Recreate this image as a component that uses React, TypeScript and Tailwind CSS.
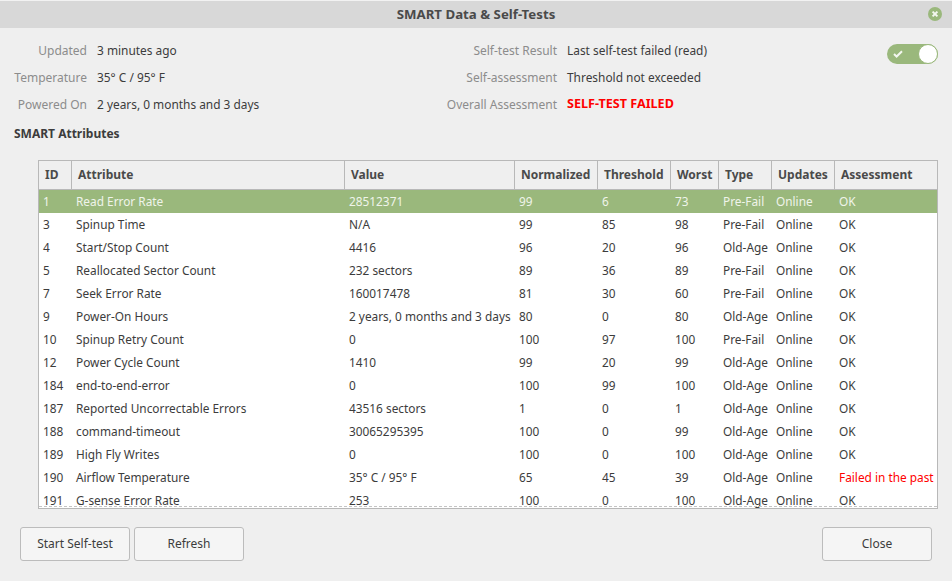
const COLUMNS = 'grid grid-cols-[33px_273px_170px_83px_73px_48px_53px_63px_103px]';

const HEADERS = ['ID', 'Attribute', 'Value', 'Normalized', 'Threshold', 'Worst', 'Type', 'Updates', 'Assessment'];

const ROWS: string[][] = [
  ['1', 'Read Error Rate', '28512371', '99', '6', '73', 'Pre-Fail', 'Online', 'OK'],
  ['3', 'Spinup Time', 'N/A', '99', '85', '98', 'Pre-Fail', 'Online', 'OK'],
  ['4', 'Start/Stop Count', '4416', '96', '20', '96', 'Old-Age', 'Online', 'OK'],
  ['5', 'Reallocated Sector Count', '232 sectors', '89', '36', '89', 'Pre-Fail', 'Online', 'OK'],
  ['7', 'Seek Error Rate', '160017478', '81', '30', '60', 'Pre-Fail', 'Online', 'OK'],
  ['9', 'Power-On Hours', '2 years, 0 months and 3 days', '80', '0', '80', 'Old-Age', 'Online', 'OK'],
  ['10', 'Spinup Retry Count', '0', '100', '97', '100', 'Pre-Fail', 'Online', 'OK'],
  ['12', 'Power Cycle Count', '1410', '99', '20', '99', 'Old-Age', 'Online', 'OK'],
  ['184', 'end-to-end-error', '0', '100', '99', '100', 'Old-Age', 'Online', 'OK'],
  ['187', 'Reported Uncorrectable Errors', '43516 sectors', '1', '0', '1', 'Old-Age', 'Online', 'OK'],
  ['188', 'command-timeout', '30065295395', '100', '0', '99', 'Old-Age', 'Online', 'OK'],
  ['189', 'High Fly Writes', '0', '100', '0', '100', 'Old-Age', 'Online', 'OK'],
  ['190', 'Airflow Temperature', '35° C / 95° F', '65', '45', '39', 'Old-Age', 'Online', 'Failed in the past'],
  ['191', 'G-sense Error Rate', '253', '100', '0', '100', 'Old-Age', 'Online', 'OK'],
];

function InfoRow({ label, labelWidth, value, danger }: { label: string; labelWidth: string; value: string; danger?: boolean }) {
  return (
    <div className="flex h-[27px] items-center gap-[10px]">
      <span className={`${labelWidth} text-right text-[#8c8c8c] whitespace-nowrap`}>{label}</span>
      <span className={danger ? 'text-[12.6px] font-bold text-[#ff0000]' : 'text-[11.9px]'}>{value}</span>
    </div>
  );
}

function Button({ label }: { label: string }) {
  return (
    <button className="h-[34px] w-[110px] rounded-[3px] border border-[#bcbcbc] bg-[#f5f5f5] text-[#3c3c3c]">{label}</button>
  );
}

export default function App() {
  return (
    <div className="flex h-[581px] w-[952px] flex-col overflow-hidden bg-[#efefef] font-['Noto_Sans',sans-serif] text-[12px] text-[#3c3c3c]">
      {/* title bar */}
      <div className="relative flex h-[28px] shrink-0 items-center justify-center border-t border-[#f2f2f2] bg-[#d8d8d8] text-[13.25px] font-bold text-[#4a4a4a]">
        SMART Data &amp; Self-Tests
        <svg className="absolute right-[10px] top-[6px]" width="14" height="14" viewBox="0 0 14 14">
          <circle cx="7" cy="7" r="7" fill="#9ab87c" />
          <path d="M4.6 4.6 9.4 9.4M9.4 4.6 4.6 9.4" stroke="#f4f7f0" strokeWidth="2" />
        </svg>
      </div>

      {/* summary */}
      <div className="flex h-[92px] shrink-0 pl-[14px] pr-[14px] pt-[9px]">
        <div className="w-[360px]">
          <InfoRow label="Updated" labelWidth="w-[73px]" value="3 minutes ago" />
          <InfoRow label="Temperature" labelWidth="w-[73px]" value="35° C / 95° F" />
          <InfoRow label="Powered On" labelWidth="w-[73px]" value="2 years, 0 months and 3 days" />
        </div>
        <div className="w-[513px]">
          <InfoRow label="Self-test Result" labelWidth="w-[183px]" value="Last self-test failed (read)" />
          <InfoRow label="Self-assessment" labelWidth="w-[183px]" value="Threshold not exceeded" />
          <InfoRow label="Overall Assessment" labelWidth="w-[183px]" value="SELF-TEST FAILED" danger />
        </div>
        <div className="mt-[7px] flex h-[20px] w-[51px] shrink-0 items-center justify-between rounded-full bg-[#9ab87c] pl-[6px]">
          <svg width="10" height="8" viewBox="0 0 10 8">
            <path d="M1 4 3.6 6.5 9 1.2" fill="none" stroke="#f4f7f0" strokeWidth="2" />
          </svg>
          <span className="h-[20px] w-[20px] rounded-full border border-[#9ab87c] bg-white" />
        </div>
      </div>

      <div className="h-[27px] shrink-0 pl-[14px] font-bold leading-[27px]">SMART Attributes</div>

      {/* attribute table */}
      <div className="relative ml-[38px] mt-[13px] h-[349px] w-[900px] shrink-0 overflow-hidden border border-[#b8b8b8] bg-white">
        <div className={`${COLUMNS} h-[29px] border-b border-[#b8b8b8] bg-[#efefef] font-bold text-[#4a4a4a]`}>
          {HEADERS.map((h) => (
            <div key={h} className="flex items-center border-r border-[#b8b8b8] pl-[6px] last:border-r-0">{h}</div>
          ))}
        </div>
        {ROWS.map((row, i) => (
          <div key={row[0]} className={`${COLUMNS} h-[23px] items-center text-[11.85px] ${i === 0 ? 'bg-[#9ab87c] text-[#eff4ea]' : ''}`}>
            {row.map((cell, j) => (
              <div key={j} className={`whitespace-nowrap pl-[4px] ${cell === 'Failed in the past' ? 'text-[#ff0000]' : ''}`}>{cell}</div>
            ))}
          </div>
        ))}
        <div className="absolute inset-x-0 bottom-[1px] border-b border-dashed border-[#c4c4c4]" />
      </div>

      {/* actions */}
      <div className="mt-[18px] flex items-center gap-[4px] pl-[20px] pr-[20px]">
        <Button label="Start Self-test" />
        <Button label="Refresh" />
        <div className="flex-1" />
        <Button label="Close" />
      </div>
    </div>
  );
}
